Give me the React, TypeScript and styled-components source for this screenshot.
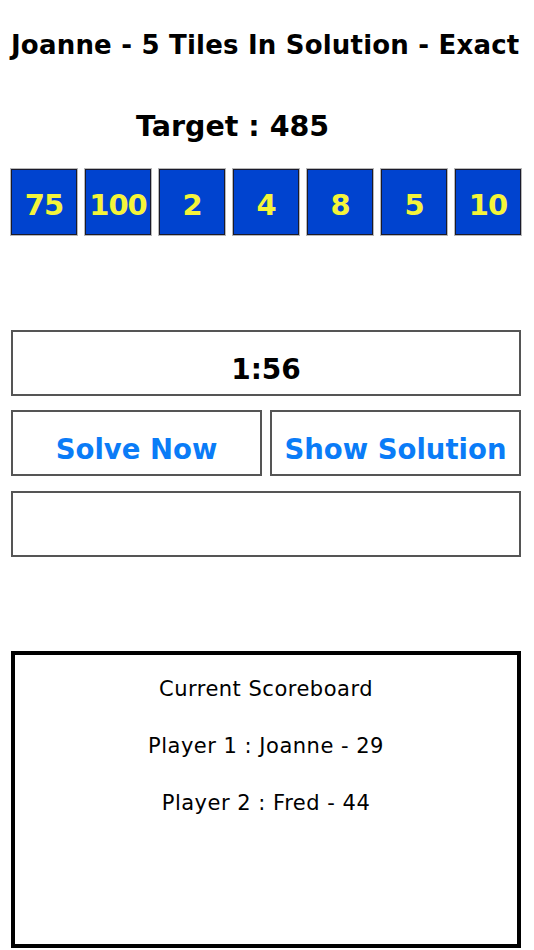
import React from "react";
import styled, { createGlobalStyle } from "styled-components";

const GlobalStyle = createGlobalStyle`
  html, body {
    margin: 0;
    padding: 0;
    background: #ffffff;
  }
  body {
    font-family: "DejaVu Sans", "Liberation Sans", sans-serif;
    color: #000;
  }
`;

const tiles = [75, 100, 2, 4, 8, 5, 10];

const players = [
  { name: "Joanne", score: 29 },
  { name: "Fred", score: 44 },
];

const App = () => {
  return (
    <>
      <GlobalStyle />
      <Screen>
        <Title>Joanne - 5 Tiles In Solution - Exact</Title>
        <Target>Target : 485</Target>
        <TileRow>
          {tiles.map((value, index) => (
            <Tile key={index}>{value}</Tile>
          ))}
        </TileRow>
        <TimerBox>1:56</TimerBox>
        <ButtonRow>
          <ActionButton>Solve Now</ActionButton>
          <ActionButton>Show Solution</ActionButton>
        </ButtonRow>
        <AnswerBox />
        <Scoreboard>
          <ScoreLine>Current Scoreboard</ScoreLine>
          {players.map((p, i) => (
            <ScoreLine key={p.name}>
              Player {i + 1} : {p.name} - {p.score}
            </ScoreLine>
          ))}
        </Scoreboard>
      </Screen>
    </>
  );
};

const Screen = styled.div`
  width: 510px;
  height: 950px;
  margin-left: 11px;
  display: flex;
  flex-direction: column;
  box-sizing: border-box;
`;

const Title = styled.div`
  margin-top: 28px;
  height: 34px;
  line-height: 34px;
  font-size: 26px;
  font-weight: bold;
  letter-spacing: 0.2px;
  white-space: nowrap;
`;

const Target = styled.div`
  margin-top: 48px;
  padding-left: 125px;
  height: 34px;
  line-height: 34px;
  font-size: 28.5px;
  font-weight: bold;
`;

const TileRow = styled.div`
  margin-top: 25px;
  display: flex;
  justify-content: space-between;
`;

const Tile = styled.div`
  width: 66px;
  height: 66px;
  box-sizing: border-box;
  padding-top: 6px;
  background: #0043cf;
  border: 1px solid #1a1a2a;
  box-shadow: 0 0 0 1px #b8b8b8;
  color: #f4f43a;
  font-size: 29px;
  font-weight: bold;
  display: flex;
  align-items: center;
  justify-content: center;
  letter-spacing: -1px;
`;

/* plain outlined panel shared by the timer, buttons and answer area */
const Box = styled.div`
  height: 66px;
  box-sizing: border-box;
  padding-top: 12px;
  border: 2px solid #555;
  background: #fff;
  display: flex;
  align-items: center;
  justify-content: center;
`;

const TimerBox = styled(Box)`
  margin-top: 95px;
  font-size: 28px;
  font-weight: bold;
`;

const ButtonRow = styled.div`
  margin-top: 14px;
  display: grid;
  grid-template-columns: 1fr 1fr;
  gap: 8px;
`;

const ActionButton = styled(Box)`
  color: #0a7cf7;
  font-size: 27.5px;
  font-weight: bold;
  white-space: nowrap;
`;

const AnswerBox = styled(Box)`
  margin-top: 15px;
`;

const Scoreboard = styled.div`
  margin-top: 94px;
  height: 297px;
  box-sizing: border-box;
  border: 4px solid #000;
  display: flex;
  flex-direction: column;
  align-items: center;
  padding-top: 22px;
  gap: 33px;
`;

const ScoreLine = styled.div`
  font-size: 21px;
  line-height: 24px;
  letter-spacing: 0.5px;
  white-space: nowrap;
`;

export default App;
